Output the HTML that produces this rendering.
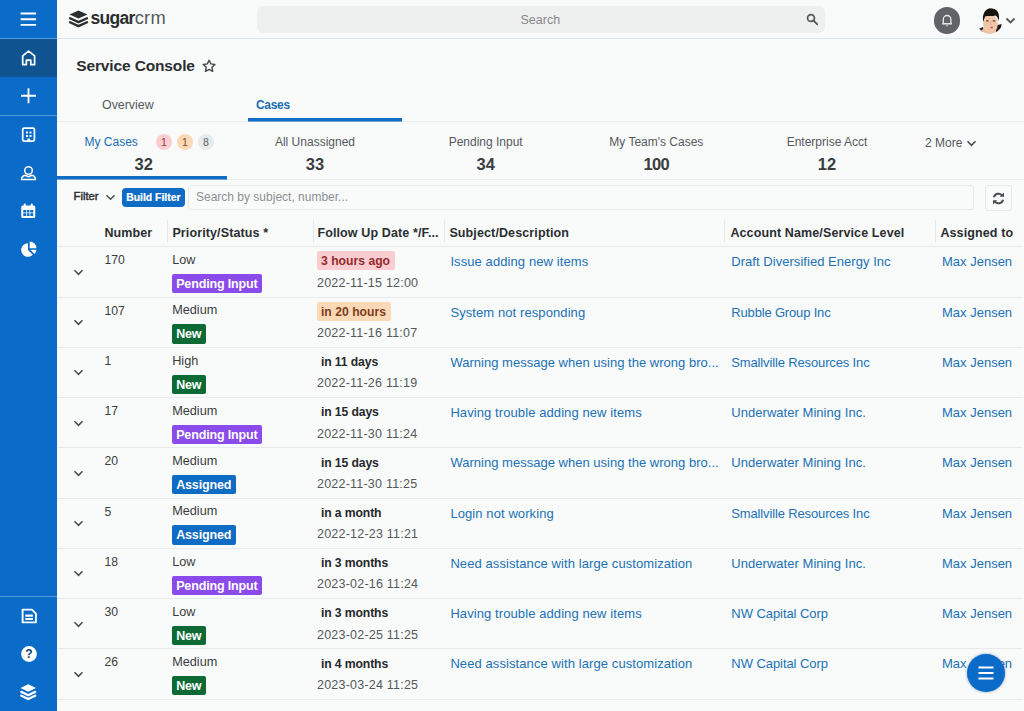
<!DOCTYPE html>
<html lang="en">
<head>
<meta charset="utf-8">
<title>Service Console</title>
<style>
*{box-sizing:border-box;margin:0;padding:0}
html,body{width:1024px;height:711px;overflow:hidden}
body{background:#f9fbfb;font-family:"Liberation Sans",sans-serif;font-size:12.5px;color:#3a3d40;position:relative}
.abs,.t{position:absolute}
.t{white-space:nowrap;line-height:16px}
/* sidebar */
#side{position:absolute;left:0;top:0;width:57px;height:711px;background:#0a6bc8}
#side .active{position:absolute;left:0;top:39px;width:57px;height:38px;background:#0f5391}
#side .hr{position:absolute;left:0;width:57px;height:1px;background:#4f9bdc}
#side svg{position:absolute}
/* top bar */
#top{position:absolute;left:57px;top:0;width:967px;height:39px;border-bottom:1px solid #d9e6ee}
#search{position:absolute;left:257px;top:6px;width:568px;height:26.5px;border-radius:6px;background:#eeefef}
.blue{color:#1a6bb0}
.b{font-weight:bold}
.dot{position:absolute;height:0;border-top:1px solid #e9ecec}
.vsep{position:absolute;width:0;border-left:1px solid #e6e9e9;top:220px;height:23px}

.sub{position:absolute;top:134px;width:170.67px;text-align:center;font-size:12px;color:#55585b;line-height:16px}
.sub .n{display:block;font-weight:bold;font-size:16.5px;line-height:20px;margin-top:4.3px;color:#3a3d40}
.bd{position:absolute;top:134px;width:16px;height:16px;border-radius:50%;font-size:10.5px;line-height:16px;text-align:center;color:#8a3a3a}
.th{position:absolute;top:225.3px;margin-left:.4px;font-weight:bold;font-size:12.5px;letter-spacing:.12px;line-height:16px;color:#2b2e30;white-space:nowrap}
.row{position:absolute;left:57px;width:966px;height:50.25px;border-top:1px solid #e7eaea}
.row .t{font-size:13px;color:#3a3d40;top:7px}
.row .chev{position:absolute;left:16.1px;top:21.5px}
.row .c1{left:47.4px;font-size:12.2px;top:5.1px}.row .c2{left:115.2px;font-size:12.7px;top:4.8px}.row .c4{left:393.4px;letter-spacing:.09px}.row .c5{left:674.3px;letter-spacing:.04px}.row .c6{left:885px}
.row .blue{color:#2171b4}
.row .dt{left:260px;top:27.6px;color:#55585b;font-size:12.5px;letter-spacing:.22px}
.st{position:absolute;left:114.6px;top:26.9px;height:19.3px;line-height:21.3px;padding:0 4.6px;letter-spacing:-.15px;border-radius:2px;color:#fff;font-weight:bold;font-size:12.5px;white-space:nowrap}
.st.p{background:#8a4bea}.st.g{background:#0e6a35}.st.a{background:#0f6cc4}
.fu{position:absolute;left:259.6px;top:4px;height:19px;line-height:21px;padding:0 4.8px 0 4.4px;border-radius:2px;font-weight:bold;font-size:12.2px;letter-spacing:0;white-space:nowrap;color:#25282a}
.fu.n{letter-spacing:-.12px}
.fu.n{top:4.3px}
.fu.r{background:#fbcdd0;color:#932a2e}.fu.o{background:#fcd9b6;color:#7d3d20}
</style>
</head>
<body>
<!-- SIDEBAR -->
<div id="side">
  <div class="active"></div>
  <div class="hr" style="top:38px"></div>
  <div class="hr" style="top:115px"></div>
  <div class="hr" style="top:596px"></div>
  <!-- hamburger -->
  <svg style="left:20px;top:11px" width="17" height="16" viewBox="0 0 17 16"><path d="M0.600 2.450h15.500M0.600 8.200h15.500M0.600 13.900h15.500" stroke="#fff" stroke-width="1.900" fill="none"/></svg>
  <!-- home -->
  <svg style="left:20px;top:49px" width="17" height="18" viewBox="0 0 17 18"><path d="M2.700 15.700V6.900L8.600 2.200l6 4.700v8.800h-3.800v-4.600H6.400v4.600z" stroke="#fff" stroke-width="1.700" fill="none" stroke-linejoin="round"/></svg>
  <!-- plus -->
  <svg style="left:20px;top:87px" width="17" height="17" viewBox="0 0 17 17"><path d="M8.500 1.300v14.900M1 8.750h15" stroke="#fff" stroke-width="1.800" fill="none"/></svg>
  <!-- building -->
  <svg style="left:21px;top:126.800px" width="15" height="16" viewBox="0 0 15 16"><rect x="1.700" y="1.100" width="11.700" height="13" rx="1.300" stroke="#fff" stroke-width="1.700" fill="none"/><path d="M5 4.5h2v2H5zM8.5 4.5h2v2h-2zM5 8h2v2H5zM8.5 8h2v2h-2zM6.5 11.5h2.5v3H6.5z" fill="#fff"/></svg>
  <!-- person -->
  <svg style="left:20px;top:164.500px" width="17" height="16" viewBox="0 0 17 16"><circle cx="8.500" cy="5.500" r="3.800" stroke="#fff" stroke-width="1.500" fill="none"/><path d="M1.500 14.600c0-2.300 1.400-4 3.700-4.400l3.300 1.500 3.300-1.500c2.300.4 3.700 2.100 3.700 4.400z" stroke="#fff" stroke-width="1.500" fill="none" stroke-linejoin="round"/></svg>
  <!-- calendar -->
  <svg style="left:20.300px;top:202.700px" width="16.500" height="16" viewBox="0 0 16 16"><rect x="1" y="2.5" width="14" height="12.5" rx="1.5" fill="#fff"/><rect x="3.5" y="0.5" width="2" height="4" rx="1" fill="#fff"/><rect x="10.5" y="0.5" width="2" height="4" rx="1" fill="#fff"/><path d="M3 7h3v2.5H3zM6.8 7h2.4v2.5H6.8zM10 7h3v2.5h-3zM3 10.3h3V13H3zM6.8 10.3h2.4V13H6.8zM10 10.3h3V13h-3z" fill="#0a6bc8"/></svg>
  <!-- pie -->
  <svg style="left:21px;top:240.500px" width="16" height="16" viewBox="0 0 16 16"><path d="M7 2.2V9l4.8 4.8A6.8 6.8 0 1 1 7 2.2z" fill="#fff"/><path d="M8.7 0.5a6.8 6.8 0 0 1 6.8 6.8H8.7z" fill="#fff"/><path d="M9.3 8.8h6.1a6.8 6.8 0 0 1-1.9 4.2z" fill="#fff"/></svg>
  <!-- doc -->
  <svg style="left:20.500px;top:608.300px" width="16.500" height="16" viewBox="0 0 16.500 16"><path d="M1.600 1.600h9.300l4 4v8.800H1.600z" stroke="#fff" stroke-width="1.900" fill="none" stroke-linejoin="round"/><path d="M4.300 6.600h7.600v2.100H4.300zM4.300 9.900h7.600v2.100H4.300z" fill="#fff"/></svg>
  <!-- help -->
  <svg style="left:20.500px;top:646.200px" width="16" height="16" viewBox="0 0 16 16"><circle cx="8" cy="8" r="7.900" fill="#fff"/><text x="8" y="12.300" text-anchor="middle" font-family="Liberation Sans, sans-serif" font-weight="bold" font-size="12" fill="#0b3f7a">?</text></svg>
  <!-- layers -->
  <svg style="left:20.400px;top:684px" width="16.500" height="16.500" viewBox="0 0 16.500 16.500"><path d="M8.250 0.300l7.750 3.700-7.750 3.700L0.500 4z" fill="#fff"/><path d="M1.300 7.900l6.950 3.300 6.950-3.300M1.300 11.700l6.950 3.300 6.950-3.300" stroke="#fff" stroke-width="2.300" fill="none" stroke-linejoin="round" stroke-linecap="round"/></svg>
</div>

<!-- TOP BAR -->
<div id="top"></div>
<svg class="abs" style="left:68.500px;top:10px" width="19" height="18" viewBox="0 0 19 18"><path d="M9.500 0.400l9 4.100-9 4.100-9-4.100z" fill="#2b2e30"/><path d="M1 8.300l8.500 3.800 8.500-3.800M1 12.300l8.500 3.800 8.500-3.800" stroke="#2b2e30" stroke-width="2.300" fill="none" stroke-linejoin="round" stroke-linecap="round"/></svg>
<div class="t" style="left:90.500px;top:8px;font-size:17.500px;letter-spacing:-.35px;line-height:20px;color:#2b2e30"><span class="b" style="letter-spacing:-.7px">sugar</span><span style="color:#55585b;font-size:18.300px;letter-spacing:.25px">crm</span></div>
<div id="search"></div>
<div class="t" style="left:520.500px;top:11.800px;font-size:12.500px;color:#85898d">Search</div>
<svg class="abs" style="left:805.500px;top:13px" width="12.500" height="12.500" viewBox="0 0 13 13"><circle cx="5.2" cy="5.2" r="3.6" stroke="#55585b" stroke-width="1.8" fill="none"/><path d="M8 8l3.8 3.8" stroke="#55585b" stroke-width="2" stroke-linecap="round"/></svg>
<!-- bell -->
<div class="abs" style="left:933.800px;top:7.100px;width:26.600px;height:26.600px;border-radius:50%;background:#616466"></div>
<svg class="abs" style="left:941px;top:13.200px" width="13" height="14" viewBox="0 0 13 14"><path d="M2.300 10.400V6.300a3.800 3.800 0 0 1 7.600 0v4.100" stroke="#e9ecee" stroke-width="1.300" fill="none"/><path d="M1.200 10.800h9.800" stroke="#e9ecee" stroke-width="1.500"/><path d="M5.200 12.700h1.800" stroke="#d5d8da" stroke-width="1.100"/></svg>
<!-- avatar -->
<svg class="abs" style="left:977px;top:7px" width="26" height="28" viewBox="0 0 26 28"><defs><clipPath id="av"><circle cx="12.600" cy="13.900" r="13"/></clipPath></defs><g clip-path="url(#av)"><rect width="26" height="28" fill="#f8f9f9"/><path d="M19 18.500l5.500-1.500-.5 6.500-5 2z" fill="#1d1b1b"/><path d="M1.500 22l4.500-2 1 4.500-4 1z" fill="#2a2322"/><ellipse cx="11.500" cy="25.500" rx="8" ry="4.500" fill="#ecc0a4"/><ellipse cx="13.500" cy="17" rx="7.300" ry="10" fill="#f0c6ab"/><path d="M6.300 15c-1.500-7.500 1.500-13.600 7.700-13.800 6.500-.2 9.300 5.800 7.600 12.800-.6-3-1.400-4.600-2.800-5.600-3.500.8-7.500.4-10.300.8-1 1.500-1.700 3.600-2.200 5.800z" fill="#17130f"/><ellipse cx="10.300" cy="13.900" rx="1.400" ry=".8" fill="#7d4f35"/><ellipse cx="17" cy="13.900" rx="1.400" ry=".8" fill="#7d4f35"/><ellipse cx="14.600" cy="20.600" rx="1.500" ry=".8" fill="#cf5148"/><path d="M13.500 14.500v3.500" stroke="#e3ad90" stroke-width="1.200"/></g></svg>
<svg class="abs" style="left:1005.300px;top:17.300px" width="11" height="8" viewBox="0 0 11 8"><path d="M1.500 1.500l4 4 4-4" stroke="#55585b" stroke-width="1.800" fill="none"/></svg>

<!-- TITLE -->
<div class="t b" style="left:76.300px;top:55.500px;font-size:15.5px;letter-spacing:-.14px;line-height:20px;color:#2b2e30">Service Console</div>
<svg class="abs" style="left:202px;top:58.700px" width="14.200" height="13.200" viewBox="0 0 15 14"><path d="M7.500 1.300l1.900 3.900 4.300.6-3.100 3 .7 4.300-3.800-2-3.800 2 .7-4.300-3.100-3 4.300-.6z" stroke="#484b4e" stroke-width="1.550" fill="none" stroke-linejoin="round"/></svg>

<!-- MAIN TABS -->
<div class="t" style="left:102px;top:96.600px;font-size:12.4px;color:#55585b">Overview</div>
<div class="t b" style="left:256px;top:96.600px;font-size:12px;letter-spacing:-.3px;color:#1a6bb0">Cases</div>
<div class="dot" style="left:57px;top:121.300px;width:967px"></div>
<div class="abs" style="left:248.300px;top:118px;width:154px;height:3px;background:#0f6cc4;box-shadow:0 1px 0 rgba(15,108,196,.55)"></div>

<div class="dot" style="left:57px;top:179px;width:967px"></div>
<div class="sub" style="left:57px;text-align:left;padding-left:27.500px"><span class="blue">My Cases</span><span class="n" style="padding-left:50px">32</span></div>
<div class="bd" style="left:155.800px;background:#fbcdd0">1</div>
<div class="bd" style="left:176.900px;background:#fcd9b6;color:#7d4a26">1</div>
<div class="bd" style="left:197.800px;background:#e6eaed;color:#5f6366">8</div>
<div class="sub" style="left:229.670px">All Unassigned<span class="n">33</span></div>
<div class="sub" style="left:400.330px">Pending Input<span class="n">34</span></div>
<div class="sub" style="left:571px">My Team's Cases<span class="n" style="letter-spacing:-.6px">100</span></div>
<div class="sub" style="left:741.670px">Enterprise Acct<span class="n">12</span></div>
<div class="t" style="left:925px;top:135px;font-size:12px;color:#55585b">2 More</div>
<svg class="abs" style="left:966px;top:140px" width="11" height="7" viewBox="0 0 11 7"><path d="M1.500 1.300l4 4 4-4" stroke="#4a4d50" stroke-width="1.600" fill="none"/></svg>
<div class="abs" style="left:57px;top:176px;width:170.400px;height:3px;background:#0f6cc4;box-shadow:0 1px 0 rgba(15,108,196,.55)"></div>

<div class="t" style="left:73.500px;top:188px;font-size:11.300px;color:#2b2e30;-webkit-text-stroke:.45px #2b2e30">Filter</div>
<svg class="abs" style="left:104.500px;top:193.700px" width="11" height="7" viewBox="0 0 11 7"><path d="M1.500 1.300l4 4 4-4" stroke="#4a4d50" stroke-width="1.500" fill="none"/></svg>
<div class="abs" style="left:122px;top:188px;width:62.700px;height:18.600px;border-radius:4px;background:#0f6cc4;color:#fff;font-weight:bold;font-size:10.400px;line-height:19.800px;-webkit-text-stroke:.2px #fff;text-align:center;white-space:nowrap">Build Filter</div>
<div class="abs" style="left:188px;top:184.500px;width:786px;height:25px;border:1px solid #e6e9e9;border-radius:3px"></div>
<div class="t" style="left:196px;top:189px;font-size:12px;color:#8b8f93">Search by subject, number...</div>
<div class="abs" style="left:985px;top:184.500px;width:27px;height:26.500px;border:1px solid #e6e9e9;border-radius:3px"></div>
<svg class="abs" style="left:992px;top:191.600px" width="13" height="13" viewBox="0 0 13 13"><path d="M1.900 5.300A4.700 4.700 0 0 1 10 3.300" stroke="#4a4d50" stroke-width="2" fill="none"/><path d="M12 0.500v4.300H7.700z" fill="#4a4d50"/><path d="M11.100 7.700A4.700 4.700 0 0 1 3 9.700" stroke="#4a4d50" stroke-width="2" fill="none"/><path d="M1 12.500V8.200h4.300z" fill="#4a4d50"/></svg>

<div class="th" style="left:104px">Number</div>
<div class="th" style="left:172px">Priority/Status *</div>
<div class="th" style="left:317px">Follow Up Date */F...</div>
<div class="th" style="left:449px">Subject/Description</div>
<div class="th" style="left:730px">Account Name/Service Level</div>
<div class="th" style="left:940px">Assigned to</div>
<div class="vsep" style="left:167px"></div><div class="vsep" style="left:313px"></div><div class="vsep" style="left:444px"></div><div class="vsep" style="left:724px"></div><div class="vsep" style="left:935px"></div>
<div class="row" style="top:246.3px">
<svg class="chev" width="11" height="7" viewBox="0 0 11 7"><path d="M1.500 1.300l4 4 4-4" stroke="#4a4d50" stroke-width="1.600" fill="none"/></svg>
<span class="t c1">170</span><span class="t c2">Low</span><span class="st p">Pending Input</span>
<span class="fu r">3 hours ago</span><span class="t dt">2022-11-15 12:00</span>
<span class="t c4 blue">Issue adding new items</span><span class="t c5 blue">Draft Diversified Energy Inc</span><span class="t c6 blue">Max Jensen</span>
</div>
<div class="row" style="top:296.6px">
<svg class="chev" width="11" height="7" viewBox="0 0 11 7"><path d="M1.500 1.300l4 4 4-4" stroke="#4a4d50" stroke-width="1.600" fill="none"/></svg>
<span class="t c1">107</span><span class="t c2">Medium</span><span class="st g">New</span>
<span class="fu o">in 20 hours</span><span class="t dt">2022-11-16 11:07</span>
<span class="t c4 blue">System not responding</span><span class="t c5 blue" style="letter-spacing:-.17px">Rubble Group Inc</span><span class="t c6 blue">Max Jensen</span>
</div>
<div class="row" style="top:346.8px">
<svg class="chev" width="11" height="7" viewBox="0 0 11 7"><path d="M1.500 1.300l4 4 4-4" stroke="#4a4d50" stroke-width="1.600" fill="none"/></svg>
<span class="t c1">1</span><span class="t c2">High</span><span class="st g">New</span>
<span class="fu n">in 11 days</span><span class="t dt">2022-11-26 11:19</span>
<span class="t c4 blue" style="letter-spacing:.015px">Warning message when using the wrong bro...</span><span class="t c5 blue" style="letter-spacing:-.14px">Smallville Resources Inc</span><span class="t c6 blue">Max Jensen</span>
</div>
<div class="row" style="top:397.1px">
<svg class="chev" width="11" height="7" viewBox="0 0 11 7"><path d="M1.500 1.300l4 4 4-4" stroke="#4a4d50" stroke-width="1.600" fill="none"/></svg>
<span class="t c1">17</span><span class="t c2">Medium</span><span class="st p">Pending Input</span>
<span class="fu n">in 15 days</span><span class="t dt">2022-11-30 11:24</span>
<span class="t c4 blue">Having trouble adding new items</span><span class="t c5 blue">Underwater Mining Inc.</span><span class="t c6 blue">Max Jensen</span>
</div>
<div class="row" style="top:447.3px">
<svg class="chev" width="11" height="7" viewBox="0 0 11 7"><path d="M1.500 1.300l4 4 4-4" stroke="#4a4d50" stroke-width="1.600" fill="none"/></svg>
<span class="t c1">20</span><span class="t c2">Medium</span><span class="st a">Assigned</span>
<span class="fu n">in 15 days</span><span class="t dt">2022-11-30 11:25</span>
<span class="t c4 blue" style="letter-spacing:.015px">Warning message when using the wrong bro...</span><span class="t c5 blue">Underwater Mining Inc.</span><span class="t c6 blue">Max Jensen</span>
</div>
<div class="row" style="top:497.6px">
<svg class="chev" width="11" height="7" viewBox="0 0 11 7"><path d="M1.500 1.300l4 4 4-4" stroke="#4a4d50" stroke-width="1.600" fill="none"/></svg>
<span class="t c1">5</span><span class="t c2">Medium</span><span class="st a">Assigned</span>
<span class="fu n">in a month</span><span class="t dt">2022-12-23 11:21</span>
<span class="t c4 blue">Login not working</span><span class="t c5 blue" style="letter-spacing:-.14px">Smallville Resources Inc</span><span class="t c6 blue">Max Jensen</span>
</div>
<div class="row" style="top:547.8px">
<svg class="chev" width="11" height="7" viewBox="0 0 11 7"><path d="M1.500 1.300l4 4 4-4" stroke="#4a4d50" stroke-width="1.600" fill="none"/></svg>
<span class="t c1">18</span><span class="t c2">Low</span><span class="st p">Pending Input</span>
<span class="fu n">in 3 months</span><span class="t dt">2023-02-16 11:24</span>
<span class="t c4 blue">Need assistance with large customization</span><span class="t c5 blue">Underwater Mining Inc.</span><span class="t c6 blue">Max Jensen</span>
</div>
<div class="row" style="top:598.0px">
<svg class="chev" width="11" height="7" viewBox="0 0 11 7"><path d="M1.500 1.300l4 4 4-4" stroke="#4a4d50" stroke-width="1.600" fill="none"/></svg>
<span class="t c1">30</span><span class="t c2">Low</span><span class="st g">New</span>
<span class="fu n">in 3 months</span><span class="t dt">2023-02-25 11:25</span>
<span class="t c4 blue">Having trouble adding new items</span><span class="t c5 blue" style="letter-spacing:-.06px">NW Capital Corp</span><span class="t c6 blue">Max Jensen</span>
</div>
<div class="row" style="top:648.3px">
<svg class="chev" width="11" height="7" viewBox="0 0 11 7"><path d="M1.500 1.300l4 4 4-4" stroke="#4a4d50" stroke-width="1.600" fill="none"/></svg>
<span class="t c1">26</span><span class="t c2">Medium</span><span class="st g">New</span>
<span class="fu n">in 4 months</span><span class="t dt">2023-03-24 11:25</span>
<span class="t c4 blue">Need assistance with large customization</span><span class="t c5 blue" style="letter-spacing:-.06px">NW Capital Corp</span><span class="t c6 blue">Max Jensen</span>
</div>
<div class="row" style="top:698.550px;height:2px"></div>


<!-- FAB -->
<div class="abs" style="left:967px;top:654px;width:38px;height:38px;border-radius:50%;background:#0a6bc8;box-shadow:0 0 3px rgba(20,60,110,.5)"></div>
<svg class="abs" style="left:978px;top:666px" width="16" height="14" viewBox="0 0 16 14"><path d="M0.500 1.500h15M0.500 7h15M0.500 12.500h15" stroke="#fff" stroke-width="1.800" fill="none"/></svg>
</body>
</html>
